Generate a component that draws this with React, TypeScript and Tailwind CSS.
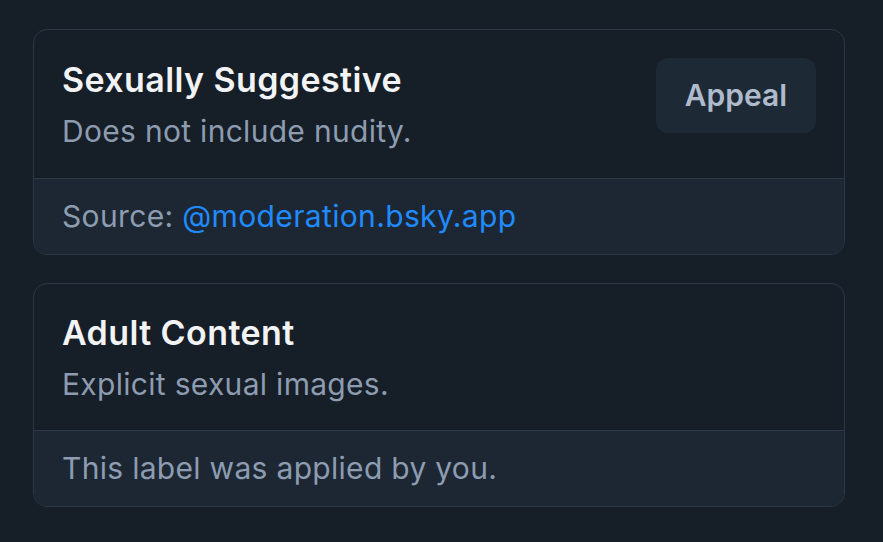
export default function App() {
  return (
    <main className="flex min-h-screen w-full flex-col gap-7 bg-[#161e27] pl-[33px] pr-[38px] pt-[29px] font-['Inter',sans-serif]">
      <section className="overflow-hidden rounded-[14px] border border-[#2c3846]">
        <div className="flex items-start justify-between pb-[28px] pl-[28px] pr-[28px] pt-[28px]">
          <div className="flex flex-col gap-[12px] pt-[2px]">
            <h2 className="text-[34px] font-semibold leading-[40px] tracking-[0.4px] text-[#f1f3f5]">Sexually Suggestive</h2>
            <p className="text-[30px] leading-[38px] tracking-[0.3px] text-[#8d9cb0]">Does not include nudity.</p>
          </div>
          <button
            type="button"
            className="flex h-[75px] w-[160px] items-center justify-center rounded-[12px] bg-[#1e2936] text-[30px] font-semibold text-[#aebbcc]">
            Appeal
          </button>
        </div>
        <div className="flex h-[76px] items-center border-t border-[#2c3846] bg-[#1c2733] pl-[28px]">
          <p className="text-[30px] tracking-[0.35px] text-[#8d9cb0]">
            Source: <a className="text-[#208bfe]">@moderation.bsky.app</a>
          </p>
        </div>
      </section>
      <section className="overflow-hidden rounded-[14px] border border-[#2c3846]">
        <div className="flex flex-col gap-[12px] pb-[27px] pl-[28px] pr-[28px] pt-[29px]">
          <h2 className="text-[34px] font-semibold leading-[40px] tracking-[0.4px] text-[#f1f3f5]">Adult Content</h2>
          <p className="text-[30px] leading-[38px] tracking-[0.3px] text-[#8d9cb0]">Explicit sexual images.</p>
        </div>
        <div className="flex h-[76px] items-center border-t border-[#2c3846] bg-[#1c2733] pl-[28px]">
          <p className="text-[30px] tracking-[0.3px] text-[#8d9cb0]">This label was applied by you.</p>
        </div>
      </section>
    </main>
  );
}
